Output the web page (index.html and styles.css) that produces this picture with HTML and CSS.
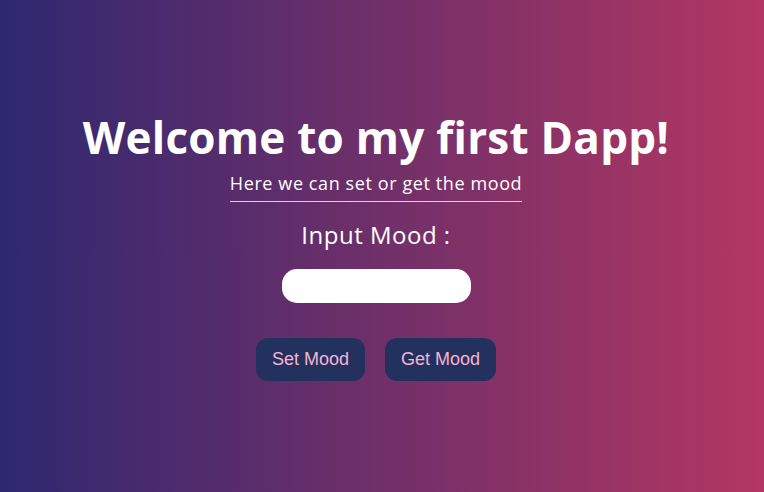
FILE: index.html
```html
<!DOCTYPE html>
<html>
<head>
<meta charset="utf-8">
<link rel="stylesheet" href="styles.css">
</head>
<body>
<main class="app">
  <h1 class="title">Welcome to my first Dapp!</h1>
  <p class="subtitle">Here we can set or get the mood</p>
  <label class="label" for="mood">Input Mood :</label>
  <input class="mood-input" id="mood" type="text">
  <div class="actions">
    <button class="btn">Set Mood</button>
    <button class="btn">Get Mood</button>
  </div>
</main>
</body>
</html>
```
FILE: styles.css
```css
html, body {
  margin: 0;
  padding: 0;
  height: 100%;
}
body {
  background: linear-gradient(to right, #2e2870, #b33762);
  font-family: "Open Sans", sans-serif;
  color: #ffffff;
}
.app {
  display: flex;
  flex-direction: column;
  align-items: center;
  padding-top: 109px;
  padding-right: 12px;
}
.title {
  margin: 0;
  font-size: 44px;
  line-height: 56px;
  font-weight: 700;
  letter-spacing: 0.25px;
}
.subtitle {
  margin: 5px 0 0;
  font-size: 18px;
  line-height: 26px;
  letter-spacing: 0.6px;
  padding-bottom: 5px;
  border-bottom: 1px solid #f1c6de;
}
.label {
  margin-top: 17px;
  font-size: 24px;
  line-height: 32px;
  font-weight: 400;
  letter-spacing: 0.5px;
}
.mood-input {
  margin-top: 18px;
  width: 189px;
  height: 34px;
  box-sizing: border-box;
  border: none;
  border-radius: 15px;
  background: #ffffff;
  outline: none;
}
.actions {
  display: flex;
  gap: 20px;
  margin-top: 35px;
}
.btn {
  font-family: "Liberation Sans", Arial, sans-serif;
  font-size: 18px;
  color: #f7b3cf;
  background: #22315e;
  border: none;
  border-radius: 12px;
  height: 43px;
  padding: 0 16px;
}
```
